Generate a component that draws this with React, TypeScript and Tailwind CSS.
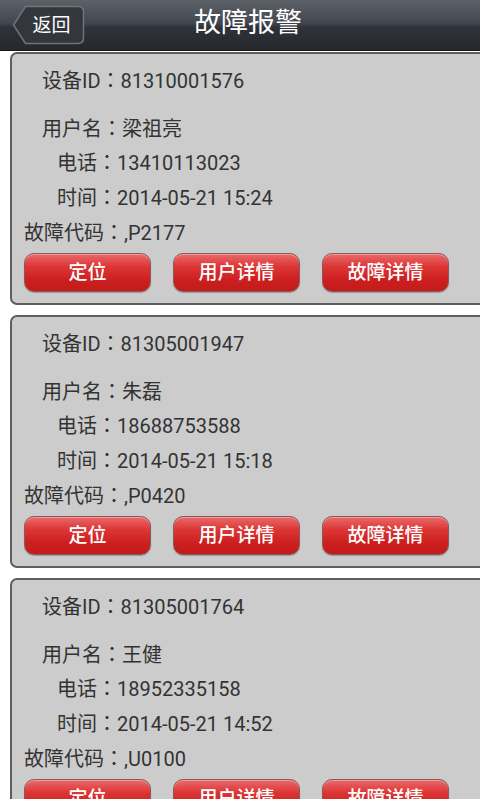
import React from 'react';

type Alarm = {
  id: string;
  user: string;
  phone: string;
  time: string;
  code: string;
};

const alarms: Alarm[] = [
  { id: '81310001576', user: '梁祖亮', phone: '13410113023', time: '2014-05-21 15:24', code: ',P2177' },
  { id: '81305001947', user: '朱磊', phone: '18688753588', time: '2014-05-21 15:18', code: ',P0420' },
  { id: '81305001764', user: '王健', phone: '18952335158', time: '2014-05-21 14:52', code: ',U0100' },
];

const font = { fontFamily: 'Roboto, "Noto Sans CJK SC", sans-serif' };

// centered full-width colon, like the old android fallback font
const Colon = () => <span style={{ fontFamily: '"Noto Sans CJK TC", sans-serif' }}>：</span>;

const RedButton: React.FC<{ label: string }> = ({ label }) => (
  <button className="w-[127px] h-[39px] rounded-[10px] border border-[#8a5a5a] bg-[linear-gradient(to_bottom,#ea6a6a_0%,#dc3434_35%,#cc2020_70%,#c41a1a_100%)] shadow-[inset_0_1px_0_rgba(255,255,255,0.35),0_1px_1px_rgba(0,0,0,0.25)] text-white text-[19px] font-medium leading-none">
    {label}
  </button>
);

const AlarmCard: React.FC<{ a: Alarm }> = ({ a }) => (
  <div className="w-[480px] h-[253px] shrink-0 rounded-[7px] border-2 border-[#5e5e5e] bg-[#cccccc] text-[#333333] text-[20px]">
    <div className="pl-[30px] mt-[12px] h-[28px] leading-[28px]">设备ID<Colon />{a.id}</div>
    <div className="pl-[30px] mt-[20px] h-[28px] leading-[28px]">用户名<Colon />{a.user}</div>
    <div className="pl-[45px] mt-[6px] h-[28px] leading-[28px]">电话<Colon />{a.phone}</div>
    <div className="pl-[45px] mt-[7px] h-[28px] leading-[28px]">时间<Colon />{a.time}</div>
    <div className="pl-[12px] mt-[7px] h-[28px] leading-[28px]">故障代码<Colon />{a.code}</div>
    <div className="pl-[12px] mt-[7px] flex gap-[22px]">
      <RedButton label="定位" />
      <RedButton label="用户详情" />
      <RedButton label="故障详情" />
    </div>
  </div>
);

export default function App() {
  return (
    <div className="w-[480px] h-[799px] overflow-hidden bg-white" style={font}>
      <div className="relative h-[51px] border-b border-[#15171a] bg-[linear-gradient(to_bottom,#5d6269_0%,#434850_45%,#2f3238_55%,#25282d_100%)] flex items-center">
        <div className="relative ml-[12px] w-[73px] h-[40px] flex items-center justify-center">
          <svg className="absolute inset-0" width="73" height="40" viewBox="0 0 73 40">
            <path
              d="M13.5 1.5 H66 Q71.5 1.5 71.5 7 V33 Q71.5 38.5 66 38.5 H13.5 L1.5 20 Z"
              fill="#33373d"
              stroke="#6f747b"
              strokeWidth="1.5"
            />
          </svg>
          <span className="relative pl-[6px] text-white text-[19px] leading-none">返回</span>
        </div>
        <div className="absolute inset-0 flex items-center justify-center pl-[16px] pb-[4px] text-white text-[27px] leading-none">
          故障报警
        </div>
      </div>
      <div className="pl-[10px] pt-[1px] flex flex-col gap-[10px]">
        {alarms.map((a) => (
          <AlarmCard key={a.id} a={a} />
        ))}
      </div>
    </div>
  );
}
